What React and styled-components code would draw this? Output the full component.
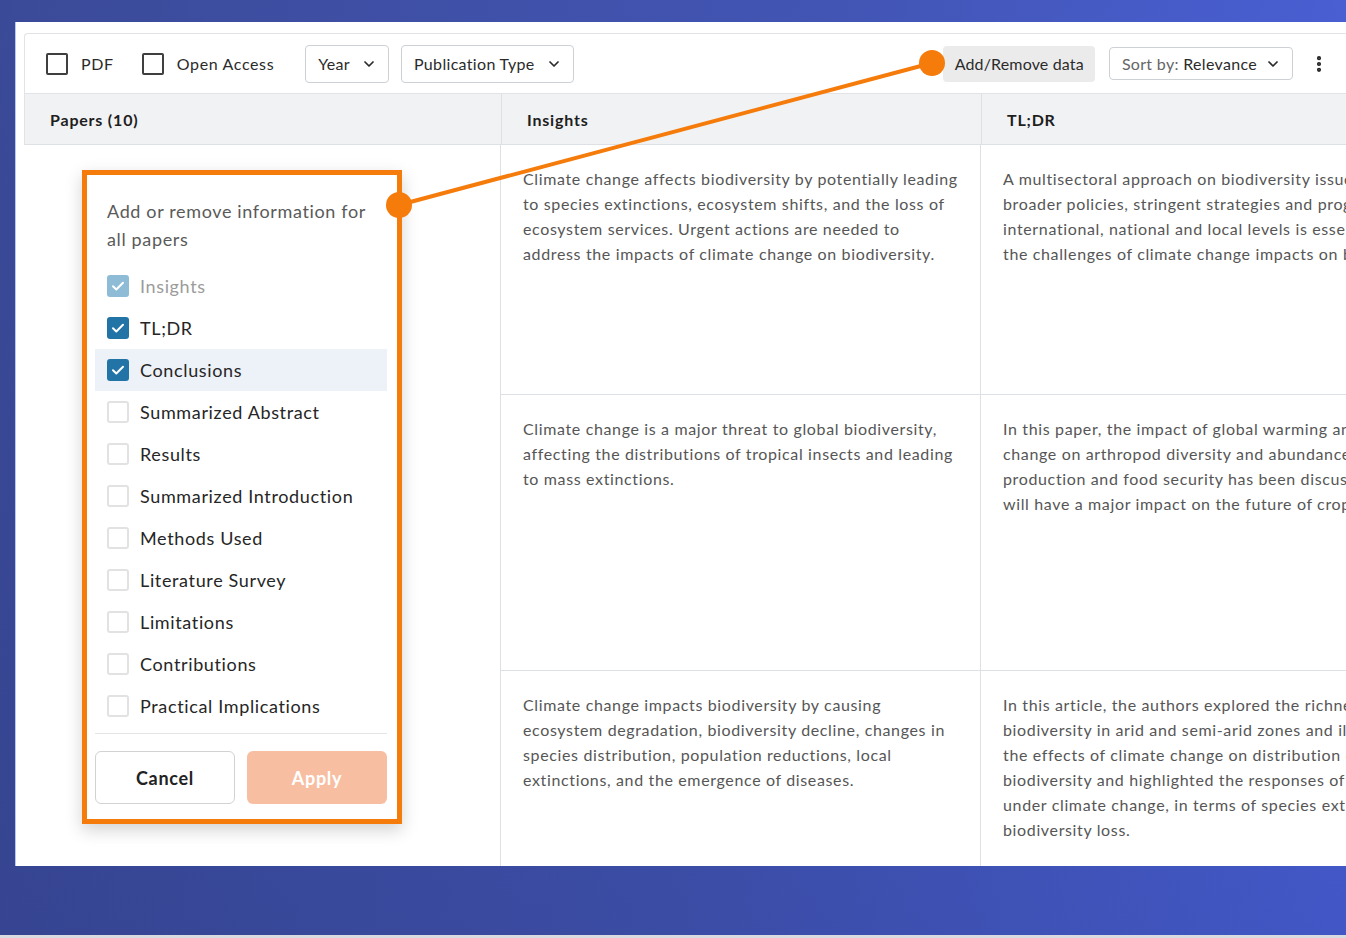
import React from 'react'
import styled, { createGlobalStyle } from 'styled-components'
import { ChevronDown, EllipsisVertical } from 'lucide-react'

const GlobalStyle = createGlobalStyle`
  html, body { margin: 0; padding: 0; }
  body {
    font-family: Lato, "Open Sans", sans-serif;
    letter-spacing: 0.04em;
    -webkit-font-smoothing: antialiased;
  }
  button { letter-spacing: 0.04em; }
  * { box-sizing: border-box; }
`

const Stage = styled.div`
  position: relative;
  width: 1346px;
  height: 938px;
  overflow: hidden;
  padding: 22px 0 0 15px;
  background:
    linear-gradient(to bottom, rgba(20, 28, 80, 0) 0%, rgba(20, 28, 80, 0.16) 100%),
    linear-gradient(100deg, #3b4a98 0%, #4255b4 55%, #4b62dc 100%);
  border-bottom: 3px solid #d9dbe0;
`

const Panel = styled.div`
  height: 844px;
  background: #fff;
  padding: 11px 0 0 8px;
  border-left: 1px solid #b9c6ee;
  overflow: hidden;
`

const Toolbar = styled.div`
  display: flex;
  align-items: center;
  height: 61px;
  padding: 0 17px 0 21px;
  border-top: 1px solid #e1e3e7;
  border-left: 1px solid #e1e3e7;
  border-bottom: 1px solid #e1e3e7;
  border-top-left-radius: 4px;
  color: #2b2b2b;
  font-size: 16px;
`

const ToolCheck = styled.label`
  display: flex;
  align-items: center;
  gap: 13px;
  margin-right: ${p => p.$mr || 29}px;
  &::before {
    content: '';
    flex: none;
    width: 18px;
    height: 18px;
    border: 2px solid #3f3f3f;
    border-radius: 2px;
  }
`

const Select = styled.button`
  display: flex;
  align-items: center;
  gap: ${p => p.$gap || 11}px;
  height: ${p => p.$h || 38}px;
  padding: 0 11px 0 12px;
  margin-right: ${p => p.$mr || 0}px;
  border: 1px solid #cdd0d5;
  border-radius: 4px;
  background: #fff;
  font: 16px Lato, sans-serif;
  letter-spacing: 0.02em;
  color: #2b2b2b;
  span { color: #666; }
`

const Spacer = styled.div`
  flex: 1;
`

const GhostButton = styled.button`
  height: 36px;
  padding: 0 11px 0 12px;
  margin-right: 14px;
  border: none;
  border-radius: 4px;
  background: #ebebec;
  font: 16px Lato, sans-serif;
  letter-spacing: 0.01em;
  color: #2b2b2b;
`

const Kebab = styled.div`
  display: flex;
  margin-left: 16px;
  color: #222;
`

const Grid = styled.div`
  display: grid;
  grid-template-columns: 477px 480px 480px;
  width: 1437px;
  border-left: ${p => (p.$head ? '1px solid #e1e3e7' : 'none')};
`

const HeadCell = styled.div`
  height: 51px;
  display: flex;
  align-items: center;
  padding-left: 25px;
  background: #f1f2f4;
  border-right: 1px solid #dde0e5;
  border-bottom: 1px solid #dde0e5;
  font-size: 16px;
  font-weight: 700;
  letter-spacing: 0.05em;
  color: #1e1e1e;
`

const Cell = styled.div`
  height: ${p => p.$h}px;
  padding: 21px 20px 0 22px;
  border-right: 1px solid #dde0e5;
  border-bottom: ${p => (p.$blank ? 'none' : '1px solid #dde0e5')};
  font-size: 16px;
  line-height: 25px;
  color: #565656;
  white-space: pre;
  overflow: hidden;
`

const Popover = styled.div`
  position: absolute;
  left: 82px;
  top: 170px;
  width: 320px;
  height: 654px;
  display: flex;
  flex-direction: column;
  padding: 22px 10px 15px 8px;
  background: #fff;
  border: 5px solid #f57b0b;
  box-shadow: 0 6px 16px rgba(0, 0, 0, 0.18);
`

const PopTitle = styled.p`
  margin: 0 0 12px;
  padding: 0 10px 0 12px;
  font-size: 18px;
  line-height: 28px;
  color: #5a5a5a;
`

const Item = styled.div`
  display: flex;
  align-items: center;
  gap: 11px;
  height: 42px;
  padding-left: 12px;
  background: ${p => (p.$active ? '#edf1f8' : 'transparent')};
  font-size: 18px;
  color: ${p => (p.$disabled ? '#9b9b9b' : '#262626')};
`

const Box = styled.span`
  display: flex;
  align-items: center;
  justify-content: center;
  width: 22px;
  height: 22px;
  border-radius: 3px;
  background: ${p => (p.$checked ? (p.$disabled ? '#8ebcd6' : '#2274a7') : '#fff')};
  border: ${p => (p.$checked ? 'none' : '2px solid #e2e2e2')};
`

const Divider = styled.div`
  margin-top: 6px;
  border-top: 1px solid #e4e4e4;
`

const Actions = styled.div`
  display: grid;
  grid-template-columns: 1fr 1fr;
  gap: 12px;
  margin-top: 17px;
`

const ActionButton = styled.button`
  height: 53px;
  border-radius: 6px;
  font: 700 18px Lato, sans-serif;
  border: ${p => (p.$primary ? 'none' : '1.5px solid #d2d2d2')};
  background: ${p => (p.$primary ? '#f8bea2' : '#fff')};
  color: ${p => (p.$primary ? '#fff' : '#222')};
`

const Connector = styled.svg`
  position: absolute;
  left: 0;
  top: 0;
  pointer-events: none;
`

const columns = ['Papers (10)', 'Insights', 'TL;DR']

const rows = [
  {
    h: 250,
    insight: 'Climate change affects biodiversity by potentially leading\nto species extinctions, ecosystem shifts, and the loss of\necosystem services. Urgent actions are needed to\naddress the impacts of climate change on biodiversity.',
    tldr: 'A multisectoral approach on biodiversity issues with\nbroader policies, stringent strategies and programs at\ninternational, national and local levels is essential to\nthe challenges of climate change impacts on biodiversity.',
  },
  {
    h: 276,
    insight: 'Climate change is a major threat to global biodiversity,\naffecting the distributions of tropical insects and leading\nto mass extinctions.',
    tldr: 'In this paper, the impact of global warming and climate\nchange on arthropod diversity and abundance, crop\nproduction and food security has been discussed, which\nwill have a major impact on the future of crops.',
  },
  {
    h: 200,
    insight: 'Climate change impacts biodiversity by causing\necosystem degradation, biodiversity decline, changes in\nspecies distribution, population reductions, local\nextinctions, and the emergence of diseases.',
    tldr: 'In this article, the authors explored the richness of\nbiodiversity in arid and semi-arid zones and illustrated\nthe effects of climate change on distribution of\nbiodiversity and highlighted the responses of species\nunder climate change, in terms of species extinction and\nbiodiversity loss.',
  },
]

const fields = [
  { label: 'Insights', checked: true, disabled: true },
  { label: 'TL;DR', checked: true },
  { label: 'Conclusions', checked: true, active: true },
  { label: 'Summarized Abstract' },
  { label: 'Results' },
  { label: 'Summarized Introduction' },
  { label: 'Methods Used' },
  { label: 'Literature Survey' },
  { label: 'Limitations' },
  { label: 'Contributions' },
  { label: 'Practical Implications' },
]

const Check = () => (
  <svg width="16" height="16" viewBox="0 0 16 16" fill="none">
    <path d="M3 8.3l3.3 3.2L13 4.8" stroke="#fff" strokeWidth="2" strokeLinecap="round" strokeLinejoin="round" />
  </svg>
)

const App = () => {
  return (
    <Stage>
      <GlobalStyle />
      <Panel>
        <Toolbar>
          <ToolCheck $mr={28}>PDF</ToolCheck>
          <ToolCheck $mr={31}>Open Access</ToolCheck>
          <Select $mr={12}>Year <ChevronDown size={16} strokeWidth={2.6} /></Select>
          <Select>Publication Type <ChevronDown size={16} strokeWidth={2.6} /></Select>
          <Spacer />
          <GhostButton>Add/Remove data</GhostButton>
          <Select $h={33} $gap={8}><div><span>Sort by:</span> Relevance</div> <ChevronDown size={16} strokeWidth={2.6} /></Select>
          <Kebab><EllipsisVertical size={20} strokeWidth={3} /></Kebab>
        </Toolbar>

        <Grid $head>
          {columns.map(c => <HeadCell key={c}>{c}</HeadCell>)}
        </Grid>
        <Grid>
          {rows.map((r, i) => (
            <React.Fragment key={i}>
              <Cell $h={r.h} $blank />
              <Cell $h={r.h}>{r.insight}</Cell>
              <Cell $h={r.h}>{r.tldr}</Cell>
            </React.Fragment>
          ))}
        </Grid>
      </Panel>

      <Popover>
        <PopTitle>Add or remove information for all papers</PopTitle>
        {fields.map(f => (
          <Item key={f.label} $active={f.active} $disabled={f.disabled}>
            <Box $checked={f.checked} $disabled={f.disabled}>{f.checked && <Check />}</Box>
            {f.label}
          </Item>
        ))}
        <Divider />
        <Actions>
          <ActionButton>Cancel</ActionButton>
          <ActionButton $primary>Apply</ActionButton>
        </Actions>
      </Popover>

      <Connector width="1346" height="938">
        <line x1="399" y1="205" x2="932" y2="63" stroke="#f57b0b" strokeWidth="4" />
        <circle cx="399" cy="205" r="13" fill="#f57b0b" />
        <circle cx="932" cy="63" r="13" fill="#f57b0b" />
      </Connector>
    </Stage>
  )
}

export default App
